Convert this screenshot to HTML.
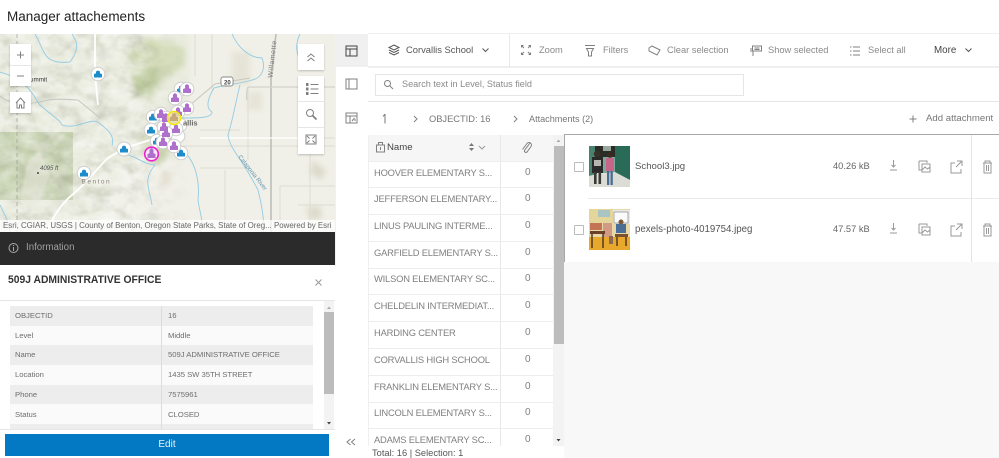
<!DOCTYPE html>
<html><head><meta charset="utf-8">
<style>
html,body{margin:0;padding:0;background:#fff}
#p{position:relative;width:999px;height:458px;overflow:hidden;background:#fff;font-family:"Liberation Sans",sans-serif;color:#6a6a6a;font-size:10px}
#p div{position:absolute}
.t{white-space:nowrap;line-height:14px}
.b{background:#fff;box-shadow:0 1px 2px rgba(0,0,0,.22)}
svg{position:absolute;overflow:visible}
.ic{fill:none;stroke:#808080;stroke-width:1}
.k{font-size:7.700px;letter-spacing:-.03px;color:#6e6e6e}
.n{font-size:9.400px;letter-spacing:-.2px;color:#808080}
.z{font-size:10px;color:#808080}
.tb{font-size:9.300px;color:#8a8a8a}
</style></head><body><div id="p">
<div class="t" style="left:7px;top:9px;font-size:13.500px;color:#222;line-height:16px">Manager attachements</div>

<!-- map -->
<svg style="left:0;top:34px" width="335" height="198" viewBox="0 34 335 198">
<defs>
<clipPath id="c"><rect x="0" y="34" width="335" height="198"/></clipPath>
<filter id="bl" x="-10%" y="-10%" width="120%" height="120%"><feGaussianBlur stdDeviation="3"/></filter>
<filter id="bs" x="-10%" y="-10%" width="120%" height="120%"><feGaussianBlur stdDeviation="1"/></filter>
<filter id="hill" x="0" y="0" width="100%" height="100%"><feTurbulence type="fractalNoise" baseFrequency=".055 .075" numOctaves="3" seed="7"/><feColorMatrix type="matrix" values="0 0 0 0 .42  0 0 0 0 .43  0 0 0 0 .33  1.200 0 0 0 -.500"/></filter>
<filter id="hillw" x="0" y="0" width="100%" height="100%"><feTurbulence type="fractalNoise" baseFrequency=".06 .08" numOctaves="3" seed="21"/><feColorMatrix type="matrix" values="0 0 0 0 1  0 0 0 0 1  0 0 0 0 1  1.200 0 0 0 -.400"/></filter>
<linearGradient id="gr" x1="0" x2="1" y1="0" y2="0"><stop offset="0" stop-color="#fff"/><stop offset=".72" stop-color="#fff"/><stop offset="1" stop-color="#000"/></linearGradient>
<mask id="m"><rect x="0" y="34" width="190" height="198" fill="url(#gr)"/></mask>
</defs>
<g clip-path="url(#c)">
<rect x="0" y="34" width="335" height="198" fill="#f0f0e8"/>
<g filter="url(#bl)">
<path d="M0 34H190V100L170 130L120 175L90 232H0Z" fill="#eaecdf"/>
<path d="M150 36L185 48L184 66L165 80L150 100L136 96L132 72L128 52Z" fill="#d3dbb8"/>
<path d="M132 76L152 66L162 78L150 96L136 97Z" fill="#b9c798"/>
<path d="M140 135L170 128L176 145L160 165L146 158Z" fill="#ccd6b0"/>
<path d="M232 52h18v32h-18zM248 92h14v18h-14z" fill="#e6e4d6"/>
<path d="M160 172h11v14h-11z" fill="#e3dfcf"/>
<path d="M312 160l14 10-4 10-12-6zM306 208l14-2 2 12-12 2z" fill="#dcdacb"/>
</g>
<path d="M0 132H73V200H0Z" fill="#c6d2b0"/>
<g mask="url(#m)">
<rect x="0" y="34" width="190" height="198" filter="url(#hill)"/>
<rect x="0" y="34" width="190" height="198" filter="url(#hillw)" opacity=".8"/>
</g>
<path d="M28 160L40 152L50 175L38 205L20 200Z" fill="#e9e7dd" opacity=".55" filter="url(#bs)"/>
<g stroke="#dcdcd2" fill="none">
<path d="M247 138H335M200 130H240M172 146H335M212 34V90M225 170V232M248 88V160M310 145V232M280 186H335M280 186V232M298 205H335"/>
<path d="M200 168H250M195 34V76"/>
</g>
<path d="M276 34L271 78V232" stroke="#bfbfba" stroke-width="1.600" fill="none"/>
<path d="M248 87H335M248 87Q246 92 247 100" stroke="#d2d2cc" stroke-width="1.300" fill="none"/>
<path d="M200 138H298" stroke="#fff" stroke-width="1.200" fill="none"/>
<path d="M46 232C52 218 62 203 72 195C85 185 100 165 108 158L125 148L150 140L165 130M95 34V75L98 105" stroke="#fff" stroke-width="1.800" fill="none"/>
<path d="M190 105L215 84L250 78M0 96C10 105 30 105 48 100C60 98 72 100 78 100L100 118" stroke="#c8c8c0" stroke-width="1.100" fill="none"/>
<path d="M17 34V232" stroke="#9c9c96" stroke-dasharray="4 3" stroke-width=".7" fill="none"/>
<g stroke="#93cbe3" stroke-width=".9" fill="none">
<path d="M232 34C238 48 250 58 262 58C266 68 262 78 252 80C240 84 228 84 214 88C208 98 205 108 212 112C212 118 200 118 182 118"/>
<path d="M240 85C236 100 234 115 228 135C230 150 240 155 258 190C262 205 265 225 263 232"/>
<path d="M182 150C195 160 200 180 198 200C200 215 205 225 200 232"/>
<path d="M120 153C135 155 145 165 155 165C142 180 150 190 152 205"/>
<path d="M35 34C45 50 42 65 70 62C82 45 75 40 72 34M0 72C30 80 35 100 40 105C55 118 60 120 62 125C75 130 90 118 98 122C108 130 115 135 112 146"/>
<path d="M0 205C5 215 10 225 10 232M300 34C292 50 300 65 310 70"/>
</g>
<g fill="#fff" stroke="#cfcfcf" stroke-width="1">
<circle cx="98" cy="74" r="6.800"/><circle cx="181" cy="89" r="6.800"/><circle cx="153" cy="117" r="6.800"/><circle cx="151" cy="130" r="6.800"/><circle cx="157" cy="141" r="6.800"/><circle cx="124" cy="149" r="7"/><circle cx="84" cy="173" r="6.800"/><circle cx="181" cy="153" r="6.800"/><circle cx="180" cy="125" r="6.800"/><circle cx="178" cy="136" r="6.800"/>
</g>
<g fill="#1d8ccb">
<path d="M94 77.500h8v-3.500l-2-.6V71.500l-2-1-2 1v1.900l-2 .6zM177 92.500h8v-3.500l-2-.6V86.500l-2-1-2 1v1.900l-2 .6zM149 120.500h8v-3.500l-2-.6V114.500l-2-1-2 1v1.900l-2 .6zM147 133.500h8v-3.500l-2-.6V127.500l-2-1-2 1v1.900l-2 .6zM153 144.500h8v-3.500l-2-.6V138.500l-2-1-2 1v1.900l-2 .6zM120 152.500h8v-3.500l-2-.6V146.500l-2-1-2 1v1.900l-2 .6zM80 176.500h8v-3.500l-2-.6V170.500l-2-1-2 1v1.900l-2 .6zM177 156.500h8v-3.500l-2-.6V150.500l-2-1-2 1v1.900l-2 .6z"/>
</g>
<g fill="#fff" stroke="#cfcfcf" stroke-width="1">
<circle cx="187" cy="89" r="6.800"/><circle cx="175" cy="98" r="6.800"/><circle cx="187" cy="108" r="6.800"/><circle cx="178" cy="112" r="6.800"/><circle cx="161" cy="114" r="6.800"/><circle cx="166" cy="118" r="6.800"/><circle cx="164" cy="127" r="6.800"/><circle cx="176" cy="129" r="6.800"/><circle cx="166" cy="133" r="6.800"/><circle cx="163" cy="142" r="6.800"/><circle cx="174" cy="146" r="6.800"/>
</g>
<g fill="#ae70ca">
<path d="M183 93h8v-4l-2-.8V85.500l-2-1.500-2 1.500v2.700l-2 .8zM171 102h8v-4l-2-.8V94.500l-2-1.500-2 1.500v2.700l-2 .8zM183 112h8v-4l-2-.8V104.500l-2-1.500-2 1.500v2.700l-2 .8zM174 116h8v-4l-2-.8V108.500l-2-1.500-2 1.500v2.700l-2 .8zM157 118h8v-4l-2-.8V110.500l-2-1.500-2 1.500v2.700l-2 .8zM162 122h8v-4l-2-.8V114.500l-2-1.500-2 1.500v2.700l-2 .8zM160 131h8v-4l-2-.8V123.500l-2-1.500-2 1.500v2.700l-2 .8zM172 133h8v-4l-2-.8V125.500l-2-1.500-2 1.500v2.700l-2 .8zM162 137h8v-4l-2-.8V129.500l-2-1.500-2 1.500v2.700l-2 .8zM159 146h8v-4l-2-.8V138.500l-2-1.500-2 1.500v2.700l-2 .8zM170 150h8v-4l-2-.8V142.500l-2-1.500-2 1.500v2.700l-2 .8z"/>
</g>
<circle cx="151.500" cy="154" r="6.800" fill="#f6e8f6" stroke="#ee22cc" stroke-width="1.600"/>
<path d="M147.500 158h8v-4l-2-.8V149.500l-2-1.500-2 1.500v3.700l-2 .8z" fill="#ae70ca"/>
<circle cx="174" cy="118" r="6.500" fill="#e8dfa8" fill-opacity=".85" stroke="#f5e800" stroke-width="1.400"/>
<path d="M170 121h8v-4l-2-.8V114l-2-1-2 1v2.200l-2 .8z" fill="#c8a878"/>
<text x="183" y="125.500" font-size="7.500" font-family="Liberation Sans" font-weight="bold" fill="#666">allis</text>
<text x="30" y="81.500" font-size="6.300" font-family="Liberation Sans" fill="#333">ummit</text>
<text x="40" y="170" font-size="6" font-style="italic" font-family="Liberation Sans" fill="#555">4095 ft</text>
<circle cx="38" cy="173" r="1" fill="#444"/>
<text x="81.500" y="183.500" font-size="6.500" letter-spacing="1.500" font-family="Liberation Sans" fill="#8a8278">Benton</text>
<text transform="translate(238 157) rotate(52)" font-size="6" font-family="Liberation Sans" fill="#5f93ad">Calapooia River</text>
<text transform="translate(272.500 78) rotate(-84)" font-size="7" font-family="Liberation Sans" letter-spacing=".5" fill="#777">Willamette</text>
<rect x="221" y="77" width="12" height="9" rx="2" fill="#fff" stroke="#666" stroke-width=".7"/>
<text x="224" y="84.500" font-size="6" font-weight="bold" font-family="Liberation Sans" fill="#444">20</text>
</g></svg>
<div style="left:0;top:220px;width:335px;height:12px;background:rgba(255,255,255,.75)"></div>
<div class="t" style="left:3px;top:219px;font-size:7.900px;color:#666">Esri, CGIAR, USGS | County of Benton, Oregon State Parks, State of Oreg...</div>
<div class="t" style="left:274px;top:219px;font-size:7.900px;color:#666">Powered by Esri</div>
<div style="left:335px;top:34px;width:1px;height:232px;background:#f1f1f1"></div>

<div class="b" style="left:10px;top:44px;width:21px;height:42px"></div>
<div style="left:10px;top:65px;width:21px;height:1px;background:#e6e6e6"></div>
<svg style="left:10px;top:44px" width="21" height="42" class="ic"><path d="M17 11h7M20.500 7.500v7" transform="translate(-10 0)"/><path d="M7 32h7"/></svg>
<div class="b" style="left:10px;top:92px;width:21px;height:21px"></div>
<svg style="left:10px;top:92px" width="21" height="21" class="ic"><path d="M6 11l4.500-5 4.500 5M7 10v6h2.500v-3h2v3H14v-6"/></svg>
<div class="b" style="left:298px;top:44px;width:26px;height:26px"></div>
<svg style="left:298px;top:44px" width="26" height="26" class="ic"><path d="M9.500 13l3.500-3 3.500 3M9.500 17l3.500-3 3.500 3"/></svg>
<div class="b" style="left:298px;top:76px;width:26px;height:78px"></div>
<div style="left:298px;top:101px;width:26px;height:1px;background:#e6e6e6"></div>
<div style="left:298px;top:127px;width:26px;height:1px;background:#e6e6e6"></div>
<svg style="left:298px;top:76px" width="26" height="78" class="ic"><path d="M12.500 8.500h8M12.500 13h8M12.500 17.500h8"/><path d="M8.500 7.500h1.500v2H8.500zM8.500 12h1.500v2H8.500zM8.500 16.500h1.500v2H8.500z" fill="#777"/><circle cx="12" cy="37" r="3.500"/><path d="M14.500 39.500l4 4" stroke-width="1.800"/><rect x="8" y="59" width="10" height="9"/><path d="M9 60l2.500 2.500M17 60l-2.500 2.500M9 67l2.500-2.500M17 67l-2.500-2.500"/></svg>

<!-- info -->
<div style="left:0;top:232px;width:335px;height:33px;background:#2b2b2b"></div>
<svg style="left:8px;top:242px" width="12" height="12"><circle cx="5.500" cy="6" r="4.500" fill="none" stroke="#aaa"/><path d="M5.500 5v4M5.500 3v1" stroke="#aaa"/></svg>
<div class="t" style="left:26px;top:241px;color:#a0a0a0;font-size:9.700px">Information</div>
<div class="t" style="left:8px;top:273px;color:#333;font-size:11px;font-weight:bold;transform-origin:0 0;transform:scaleX(.94)">509J ADMINISTRATIVE OFFICE</div>
<svg style="left:314px;top:278px" width="10" height="10"><path d="M1.500 1.500l6 6M7.500 1.500l-6 6" stroke="#999" fill="none"/></svg>
<div style="left:0;top:300px;width:335px;height:1px;background:#e6e6e6"></div>
<div style="left:10px;top:306px;width:303px;height:123px;overflow:hidden">
<div style="left:0;top:0;width:303px;height:20px;background:#ededed"></div>
<div style="left:0;top:39px;width:303px;height:20px;background:#ededed"></div>
<div style="left:0;top:79px;width:303px;height:19px;background:#ededed"></div>
<div style="left:0;top:118px;width:303px;height:10px;background:#ededed"></div>
<div style="left:0;top:20px;width:303px;height:19px;background:#fafafa"></div>
<div style="left:0;top:59px;width:303px;height:20px;background:#fafafa"></div>
<div style="left:0;top:98px;width:303px;height:20px;background:#fafafa"></div>
<div style="left:151px;top:0;width:1px;height:123px;background:#dcdcdc"></div>
</div>
<div class="t k" style="left:15px;top:309px">OBJECTID</div><div class="t k" style="left:168px;top:309px">16</div>
<div class="t k" style="left:15px;top:329px">Level</div><div class="t k" style="left:168px;top:329px">Middle</div>
<div class="t k" style="left:15px;top:348px">Name</div><div class="t k" style="left:168px;top:348px">509J ADMINISTRATIVE OFFICE</div>
<div class="t k" style="left:15px;top:368px">Location</div><div class="t k" style="left:168px;top:368px">1435 SW 35TH STREET</div>
<div class="t k" style="left:15px;top:388px">Phone</div><div class="t k" style="left:168px;top:388px">7575961</div>
<div class="t k" style="left:15px;top:408px">Status</div><div class="t k" style="left:168px;top:408px">CLOSED</div>
<div style="left:324px;top:301px;width:10px;height:128px;background:#f3f3f3"></div>
<div style="left:324px;top:312px;width:10px;height:82px;background:#bcbcbc"></div>
<svg style="left:324px;top:301px" width="10" height="128"><path d="M3 8l2-2.500L7 8z" fill="#aaa"/><path d="M3 121l2 2.500 2-2.500z" fill="#444"/></svg>
<div style="left:0;top:429px;width:335px;height:1px;background:#e6e6e6"></div>
<div class="t" style="left:5px;top:434px;width:324px;height:22px;line-height:22px;background:#0379c4;color:#e8f2f9;text-align:center;font-size:10px">Edit</div>
<svg style="left:346px;top:438px" width="11" height="9" class="ic"><path d="M4.500 1L1 4l3.500 3M9 1L5.500 4 9 7"/></svg>

<!-- nav -->
<div style="left:336px;top:34px;width:32px;height:33px;background:#f0f0f0"></div>
<svg style="left:335px;top:34px" width="33" height="100" class="ic"><path d="M11 12h11v10H11zM11 15h11M15 15v7" stroke="#444"/><path d="M11 45h11v10H11zM14 45v10"/><path d="M11 79h11v10H11zM11 82h11M15 82v7M17 87l2.500-3M20 87v-2"/></svg>

<!-- toolbar -->
<div style="left:368px;top:33px;width:631px;height:1px;background:#efefef"></div>
<div style="left:368px;top:66px;width:631px;height:2px;background:#efefef"></div>
<div style="left:509px;top:34px;width:1px;height:33px;background:#e8e8e8"></div>
<svg style="left:387px;top:44px" width="14" height="12" class="ic"><path d="M7 1l5 2.500-5 2.500-5-2.500zM2 6l5 2.500L12 6M2 8.500l5 2.500 5-2.500" stroke="#555"/></svg>
<div class="t" style="left:406px;top:43px;font-size:9.400px;color:#555">Corvallis School</div>
<svg style="left:481px;top:47px" width="9" height="7" class="ic"><path d="M1.500 1.500l3 3 3-3" stroke="#555"/></svg>
<svg style="left:520px;top:44px" width="12" height="12" class="ic"><path d="M1.500 1.500l2.500 2.500M10.500 1.500L8 4M1.500 10.500L4 8M10.500 10.500L8 8M1.500 3.500v-2h2M8.500 1.500h2v2M1.500 8.500v2h2M10.500 8.500v2h-2"/></svg>
<div class="t tb" style="left:539px;top:43px">Zoom</div>
<svg style="left:584px;top:44px" width="12" height="13" class="ic"><path d="M1 1.500h10M2.500 4.500h7L7.500 8v4h-3V8z"/></svg>
<div class="t tb" style="left:603px;top:43px">Filters</div>
<svg style="left:648px;top:45px" width="13" height="11" class="ic"><path d="M1 3l3-2 8 4-3 5-8-4z"/></svg>
<div class="t tb" style="left:667px;top:43px">Clear selection</div>
<svg style="left:749px;top:45px" width="13" height="12" class="ic"><path d="M3.500 1h9v5h-9zM1 4h2.500M1 6h2.500M4 6v5M5.500 3h5M5.500 4.500h5"/></svg>
<div class="t tb" style="left:768px;top:43px">Show selected</div>
<svg style="left:849px;top:45px" width="12" height="12" class="ic"><path d="M4 2h7M4 6h7M4 10h7M1 2h1.500M1 6h1.500M1 10h1.500"/></svg>
<div class="t tb" style="left:868px;top:43px">Select all</div>
<div class="t" style="left:934px;top:44px;font-size:9.800px;color:#444">More</div>
<svg style="left:964px;top:47px" width="9" height="7" class="ic"><path d="M1.500 1.500l3 3 3-3" stroke="#555"/></svg>

<!-- search -->
<div style="left:375px;top:74px;width:367px;height:20px;border:1px solid #e6e6e6"></div>
<svg style="left:383px;top:79px" width="11" height="11" class="ic"><circle cx="4.500" cy="4.500" r="3"/><path d="M7 7l3 3"/></svg>
<div class="t" style="left:402px;top:77px;font-size:9.100px;color:#8a8a8a">Search text in Level, Status field</div>
<div style="left:368px;top:101px;width:631px;height:1px;background:#e6e6e6"></div>

<!-- breadcrumb -->
<svg style="left:380px;top:113px" width="10" height="12" class="ic"><path d="M5 1v9.500M3 3.500l2-2.500" stroke="#777"/></svg>
<svg style="left:413px;top:115px" width="6" height="8" class="ic"><path d="M1 1l3 3-3 3"/></svg>
<div class="t" style="left:429px;top:112px;font-size:9.300px;color:#777">OBJECTID: 16</div>
<svg style="left:513px;top:115px" width="6" height="8" class="ic"><path d="M1 1l3 3-3 3"/></svg>
<div class="t" style="left:529px;top:112px;font-size:9.100px;color:#777">Attachments (2)</div>
<svg style="left:908px;top:114px" width="10" height="10" class="ic"><path d="M1.500 5h7M5 1.500v7"/></svg>
<div class="t" style="left:926px;top:112px;font-size:9.600px;color:#777">Add attachment</div>

<!-- table -->
<div style="left:368px;top:135px;width:185px;height:26px;background:#f6f6f6"></div>
<div style="left:368px;top:135px;width:1px;height:311px;background:#efefef"></div>
<svg style="left:375px;top:140px" width="11" height="13" class="ic"><path d="M1.500 5h8v7h-8zM3.500 5V2.500h4V5M5.500 7v3"/></svg>
<div class="t" style="left:387px;top:141px;font-size:9.600px;color:#444">Name</div>
<svg style="left:468px;top:142px" width="17" height="11"><path d="M1 4l2.500-3L6 4zM1 6l2.500 3L6 6z" fill="#777"/><path d="M11 4l3 3 3-3" fill="none" stroke="#999"/></svg>
<svg style="left:520px;top:140px" width="12" height="14" class="ic"><path d="M10 3L4.500 10.500a1.500 1.500 0 0 0 2.500 1.500L11 6.500a2.500 2.500 0 0 0-4-3L2.500 9.500"/></svg>
<div style="left:500px;top:135px;width:1px;height:311px;background:#e8e8e8"></div>
<div class="t n" style="left:374px;top:166px">HOOVER ELEMENTARY S...</div><div class="t z" style="left:525px;top:166px">0</div>
<div class="t n" style="left:374px;top:192px">JEFFERSON ELEMENTARY...</div><div class="t z" style="left:525px;top:192px">0</div>
<div class="t n" style="left:374px;top:219px">LINUS PAULING INTERME...</div><div class="t z" style="left:525px;top:219px">0</div>
<div class="t n" style="left:374px;top:246px">GARFIELD ELEMENTARY S...</div><div class="t z" style="left:525px;top:246px">0</div>
<div class="t n" style="left:374px;top:272px">WILSON ELEMENTARY SC...</div><div class="t z" style="left:525px;top:272px">0</div>
<div class="t n" style="left:374px;top:299px">CHELDELIN INTERMEDIAT...</div><div class="t z" style="left:525px;top:299px">0</div>
<div class="t n" style="left:374px;top:326px">HARDING CENTER</div><div class="t z" style="left:525px;top:326px">0</div>
<div class="t n" style="left:374px;top:353px">CORVALLIS HIGH SCHOOL</div><div class="t z" style="left:525px;top:353px">0</div>
<div class="t n" style="left:374px;top:380px">FRANKLIN ELEMENTARY S...</div><div class="t z" style="left:525px;top:380px">0</div>
<div class="t n" style="left:374px;top:406px">LINCOLN ELEMENTARY S...</div><div class="t z" style="left:525px;top:406px">0</div>
<div class="t n" style="left:374px;top:433px">ADAMS ELEMENTARY SC...</div><div class="t z" style="left:525px;top:433px">0</div>
<svg style="left:368px;top:161px" width="185" height="285"><path d="M0 .5H185M0 26.500H185M0 53.500H185M0 80.500H185M0 107.500H185M0 133.500H185M0 160.500H185M0 187.500H185M0 214.500H185M0 241.500H185M0 267.500H185" stroke="#ededed" fill="none"/></svg>
<div style="left:553px;top:135px;width:11px;height:311px;background:#f3f3f3"></div>
<div style="left:554px;top:146px;width:10px;height:198px;background:#bcbcbc"></div>
<svg style="left:553px;top:135px" width="11" height="311"><path d="M3.500 7l2-2.500 2 2.500z" fill="#aaa"/><path d="M3.500 304l2 2.500 2-2.500z" fill="#444"/></svg>
<div style="left:368px;top:446px;width:196px;height:12px;background:#fff"></div>
<div class="t" style="left:372px;top:447px;font-size:9.300px;color:#555;line-height:12px">Total: 16 | Selection: 1</div>

<!-- attachments -->
<div style="left:564px;top:134px;width:435px;height:324px;background:#f8f8f8"></div>
<div style="left:565px;top:135px;width:434px;height:127px;background:#fff"></div>
<div style="left:564px;top:134px;width:435px;height:1px;background:#a8a8a8"></div>
<div style="left:564px;top:134px;width:1px;height:128px;background:#a8a8a8"></div>
<div style="left:588px;top:198px;width:411px;height:1px;background:#eaeaea"></div>
<div style="left:971px;top:135px;width:1px;height:127px;background:#e4e4e4"></div>
<div style="left:574px;top:162px;width:8px;height:8px;border:1px solid #bbb;border-radius:1px"></div>
<div style="left:574px;top:225px;width:8px;height:8px;border:1px solid #bbb;border-radius:1px"></div>

<svg style="left:589px;top:146px;border-radius:3px" width="41" height="41" viewBox="0 0 41 41">
<rect width="41" height="41" fill="#e4e4de"/><path d="M0 0H41V34L26 27V0Z" fill="#2a6b58"/><path d="M0 0H8V28L0 30Z" fill="#4a8272"/><rect x="6" y="0" width="20" height="11" fill="#2c2c26"/><rect x="14" y="0" width="8" height="5" fill="#9aa79c"/><rect x="8" y="11" width="18" height="16" fill="#7fa79a"/>
<path d="M0 30L26 26L41 34V41H0Z" fill="#dcdcd6"/>
<rect x="3" y="11" width="11" height="16" fill="#2a2a2a"/><circle cx="8" cy="8" r="3.200" fill="#3a3028"/><rect x="5" y="26" width="2.600" height="12" fill="#3a3a34"/><rect x="9.500" y="26" width="2.600" height="12" fill="#3a3a34"/><rect x="5" y="14" width="7" height="6" fill="#b5b5b0"/>
<rect x="17" y="12" width="8" height="13" fill="#c8668a"/><circle cx="21" cy="9" r="2.800" fill="#3a2a20"/><rect x="18" y="25" width="2.300" height="14" fill="#4a6c94"/><rect x="21.500" y="25" width="2.300" height="14" fill="#4a6c94"/>
</svg>
<svg style="left:589px;top:209px;border-radius:3px" width="41" height="41" viewBox="0 0 41 41">
<rect width="41" height="41" fill="#e8d8a8"/><rect x="0" y="0" width="24" height="14" fill="#e4d69a"/><rect x="24" y="1" width="17" height="14" fill="#e8eaea"/><rect x="25" y="3" width="14" height="11" fill="#fafafa" stroke="#777" stroke-width=".6"/>
<rect x="9" y="1" width="12" height="7" fill="#a9c4c2"/>
<rect x="0" y="28" width="41" height="13" fill="#e8a82c"/>
<rect x="1" y="14" width="12" height="7" fill="#c47454"/><rect x="14" y="14" width="9" height="14" fill="#d09a84"/><rect x="27" y="15" width="10" height="9" fill="#4a6e98"/><circle cx="32" cy="13" r="2.500" fill="#7a5a3a"/>
<rect x="1" y="22" width="15" height="3" fill="#6a4028"/><path d="M3 25v14M14 25v14" stroke="#4a3020" stroke-width="1.400"/>
<rect x="26" y="25" width="13" height="3" fill="#7a5030"/><path d="M28 28v9M37 28v9" stroke="#4a3020" stroke-width="1.400"/><rect x="20" y="27" width="4" height="8" fill="#8a6a50"/>
</svg>
<div class="t" style="left:635px;top:160px;font-size:9.600px;color:#555">School3.jpg</div>
<div class="t" style="left:635px;top:223px;font-size:9.700px;color:#555">pexels-photo-4019754.jpeg</div>
<div class="t" style="left:833px;top:159px;font-size:9.300px;color:#666">40.26 kB</div>
<div class="t" style="left:833px;top:222px;font-size:9.300px;color:#666">47.57 kB</div>
<svg style="left:885px;top:135px" width="110" height="127" fill="none" stroke="#999" stroke-width="1"><g transform="translate(0 -2)"><path d="M8.500 27v7M6.500 32l2 2 2-2M5 37h7"/></g><path d="M34 26h8v2M34 26v9h3M37 29h8v8h-8zM37 35l3-3 2.500 2 2.500-2"/><path d="M70 28h-4v10h10v-4M72 26h5v5M77 26l-6 6"/><path d="M98 28h9M100 28v-2h5v2M99 28v10h7V28M101.500 30v6M103.500 30v6"/><g transform="translate(0 61)"><path d="M8.500 27v7M6.500 32l2 2 2-2M5 37h7"/></g><g transform="translate(0 63)"><path d="M34 26h8v2M34 26v9h3M37 29h8v8h-8zM37 35l3-3 2.500 2 2.500-2"/><path d="M70 28h-4v10h10v-4M72 26h5v5M77 26l-6 6"/><path d="M98 28h9M100 28v-2h5v2M99 28v10h7V28M101.500 30v6M103.500 30v6"/></g></svg>
</div></body></html>
